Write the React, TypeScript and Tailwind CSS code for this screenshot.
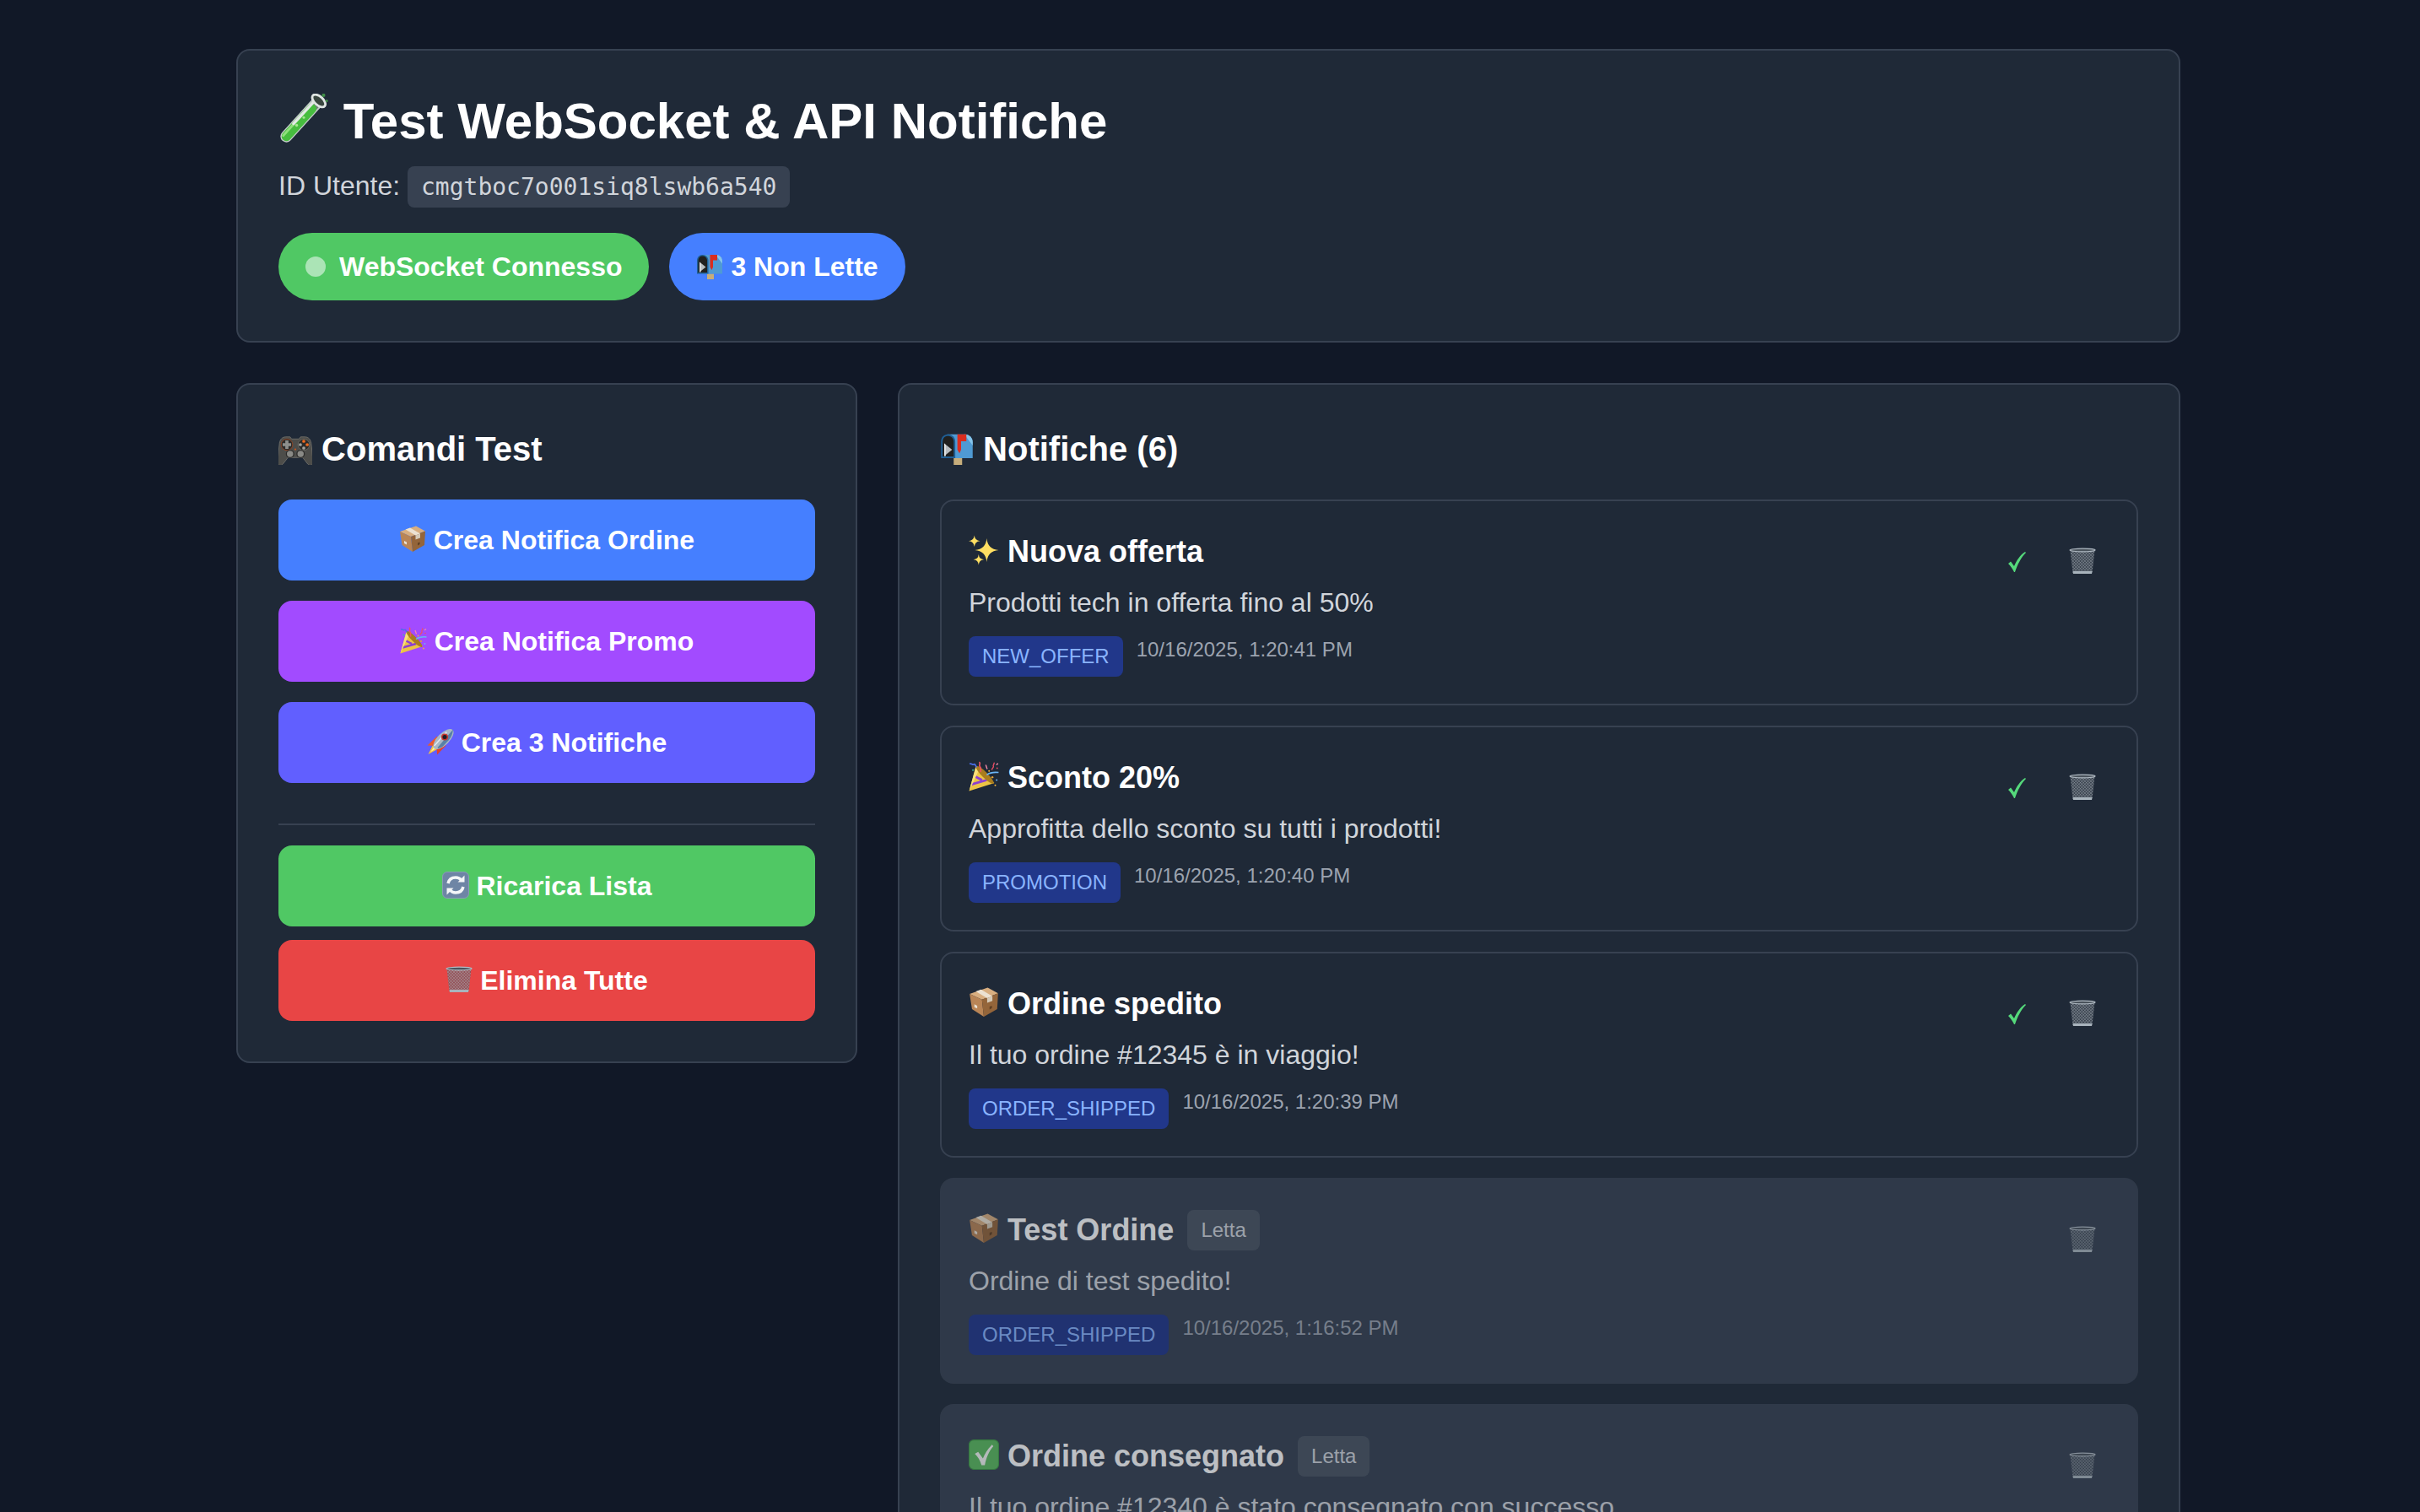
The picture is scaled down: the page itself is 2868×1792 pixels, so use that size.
type EmojiName = "tube" | "mailbox" | "gamepad" | "box" | "popper" | "rocket" | "refresh" | "trash" | "sparkles" | "checkbox";

const star = (x: number, y: number, r: number) =>
  `M${x} ${y - r}Q${x + r * 0.08} ${y - r * 0.08} ${x + r} ${y}Q${x + r * 0.08} ${y + r * 0.08} ${x} ${y + r}Q${x - r * 0.08} ${y + r * 0.08} ${x - r} ${y}Q${x - r * 0.08} ${y - r * 0.08} ${x} ${y - r}Z`;

const emojiShapes: Record<EmojiName, React.ReactNode> = {
  tube: (
    <>
      <path d="M10 54 50 10" stroke="#c3ccc8" strokeWidth="15" strokeLinecap="round" />
      <path d="M10 54 50 10" stroke="#6f7d76" strokeWidth="11" strokeLinecap="round" />
      <path d="M10 54 42 19" stroke="#47bd3f" strokeWidth="12" strokeLinecap="round" />
      <path d="M6 53 37 19" stroke="#8fe07c" strokeWidth="3" strokeLinecap="round" />
      <path d="M19 38 44 11" stroke="#e3e8e5" strokeWidth="3.5" strokeLinecap="round" />
      <ellipse cx="51" cy="9" rx="10" ry="5.5" transform="rotate(42 51 9)" fill="#39463f" stroke="#dfe5e2" strokeWidth="3" />
      <circle cx="57" cy="2" r="2.2" fill="#3f8f47" />
      <circle cx="61" cy="9" r="1.6" fill="#3f8f47" />
      <circle cx="23" cy="40" r="1.8" fill="#a7e692" />
      <circle cx="32" cy="30" r="1.6" fill="#a7e692" />
    </>
  ),
  mailbox: (
    <>
      <path d="M26 51h16v13H26z" fill="#c6ad7b" />
      <path d="M14 6h33c9 0 15 7 15 15v30H14z" fill="#4f9ad3" />
      <path d="M46 6h1c9 0 15 7 15 15v6z" fill="#86c4ea" />
      <path d="M2 20C2 12 7 6 15 6s14 6 14 14v31H2z" fill="#1f5f95" />
      <path d="M5 20C5 13 9 9 15 9s11 4 11 11v28H5z" fill="#20201f" />
      <path d="M8 23 23 35 8 47z" fill="#b8bdc0" />
      <path d="M8 23v24h3V26z" fill="#e3e6e7" />
      <path d="M33 6h17v13H40v16l-3 7-4-7z" fill="#d92d1f" />
    </>
  ),
  gamepad: (
    <g transform="translate(0 7) scale(1 .98)">
      <path d="M14 4h8l3 4h14l3-4h8c7 0 11 5 12 12l4 38c0 5-7 7-10 3L46 44H18L8 57c-3 4-10 2-10-3l4-38C3 9 7 4 14 4Z" fill="#4d4d4a" stroke="#6d6d69" strokeWidth="1.5" />
      <circle cx="16" cy="19" r="11" fill="#2c2c2b" stroke="#a1481f" strokeWidth="1.2" />
      <path d="M13 11h6v5h5v6h-5v5h-6v-5H8v-6h5z" fill="#8d8f8c" />
      <circle cx="48" cy="19" r="11" fill="#2c2c2b" stroke="#77776f" strokeWidth="1.2" />
      <circle cx="48" cy="12.5" r="3" fill="#ef6a1f" />
      <circle cx="54.5" cy="19" r="3" fill="#ef6a1f" />
      <circle cx="41.5" cy="19" r="3" fill="#a3a39e" />
      <circle cx="48" cy="25.5" r="3" fill="#a3a39e" />
      <circle cx="22" cy="37" r="7" fill="#8a8a86" stroke="#2b2b2a" strokeWidth="2" />
      <circle cx="42" cy="37" r="7" fill="#8a8a86" stroke="#2b2b2a" strokeWidth="2" />
      <circle cx="32" cy="28" r="1.8" fill="#c4561f" />
    </g>
  ),
  box: (
    <>
      <path d="M2 14 40 1l22 12-34 13z" fill="#d8ae80" />
      <path d="M2 14 28 26l4 36L7 46z" fill="#b98556" />
      <path d="M28 26 62 13l-2 33-28 16z" fill="#94653a" />
      <path d="M15 9 26 5l24 14-11 4z" fill="#ece2d2" />
      <path d="m39 23 11-4v10l-11 4z" fill="#d5cab8" />
      <path d="M12 36l6 3v6l-6-3z" fill="#e9e1d3" />
      <path d="M44 41l5-2v5l-5 3z" fill="#5f3f22" />
    </>
  ),
  popper: (
    <>
      <path d="M1 63 15 12l39 34z" fill="#ecc444" />
      <path d="M6 49 38 40M11 31l17 9" stroke="#8b3fd1" strokeWidth="5" />
      <path d="M1 63 15 12l7 6z" fill="#f8e07a" />
      <ellipse cx="34" cy="29" rx="6" ry="26" transform="rotate(-45 34 29)" fill="#a97c1e" />
      <path d="M38 29c7-5 16-6 25-5" stroke="#6ab4f5" strokeWidth="3" fill="none" />
      <path d="M22 2c5 3-2 6 2 10s-1 6 2 11" stroke="#ef5264" strokeWidth="3" fill="none" />
      <path d="M2 6c4-2 6 3 9 1s3 4 6 6" stroke="#4a6ee8" strokeWidth="3" fill="none" />
      <path d="M53 3c3 3-3 5-1 8s-4 3-3 8" stroke="#ec4d66" strokeWidth="2.5" fill="none" />
      <path d="M36 8l3 9M62 5l-4 3" stroke="#f28aa8" strokeWidth="2.5" />
      <circle cx="50" cy="34" r="2.2" fill="#e2a23a" />
      <circle cx="59" cy="40" r="1.8" fill="#6ab4f5" />
      <circle cx="56" cy="51" r="1.8" fill="#f0b23a" />
      <circle cx="43" cy="21" r="1.8" fill="#f0b23a" />
      <circle cx="60" cy="15" r="1.6" fill="#ec4d66" />
      <circle cx="9" cy="19" r="1.8" fill="#3fbf9f" />
    </>
  ),
  rocket: (
    <>
      <path d="M3 62 16 36l12 12z" fill="#f6c63b" />
      <path d="M9 56 18 42l5 5z" fill="#fff0a8" />
      <path d="M1 41 24 19l5 15-12 8z" fill="#ec5a2a" />
      <path d="M24 63 45 41l-14-6-8 12z" fill="#e2402c" />
      <ellipse cx="39" cy="26" rx="31" ry="14" transform="rotate(-45 39 26)" fill="#a9b8c5" />
      <path d="M62 3c-1 10-4 18-10 25L39 42c-4 4-9 5-12 6l-2-2z" fill="#5781a6" />
      <path d="M18 41 46 10" stroke="#e4eaef" strokeWidth="3" strokeLinecap="round" />
      <circle cx="42" cy="21" r="8" fill="#c7362b" />
      <circle cx="42" cy="21" r="5" fill="#1e1e26" />
    </>
  ),
  refresh: (
    <>
      <rect x="1" y="1" width="62" height="62" rx="11" fill="#6e85a5" stroke="#8a9cb6" strokeWidth="2" />
      <path d="M14 28c2-9 9-14 18-14 5 0 10 2 13 6" stroke="#f4f6f8" strokeWidth="7" fill="none" />
      <path d="M37 25h16V9z" fill="#f4f6f8" />
      <path d="M50 36c-2 9-9 14-18 14-5 0-10-2-13-6" stroke="#f4f6f8" strokeWidth="7" fill="none" />
      <path d="M27 39H11v16z" fill="#f4f6f8" />
    </>
  ),
  trash: (
    <>
      <defs>
        <pattern id="mesh" width="5" height="5" patternUnits="userSpaceOnUse" patternTransform="rotate(45)">
          <path d="M0 0h5v5" stroke="#b4bdc5" strokeWidth="1.3" fill="none" />
        </pattern>
      </defs>
      <path d="M3 6h58l-6 54H9z" fill="#4c5660" fillOpacity="0.55" />
      <path d="M3 6h58l-6 54H9z" fill="url(#mesh)" />
      <path d="M9 56h46l-1 6H10z" fill="#a8b3bc" />
      <ellipse cx="32" cy="6" rx="30" ry="3.6" fill="#4a535c" stroke="#b0bac3" strokeWidth="2.4" />
    </>
  ),
  sparkles: (
    <>
      <path d={star(38, 32, 25)} fill="#ffdf62" />
      <path d={star(12, 13, 12)} fill="#ffdf62" />
      <path d={star(21, 52, 11)} fill="#ffdf62" />
    </>
  ),
  checkbox: (
    <>
      <rect x="1" y="1" width="62" height="62" rx="10" fill="#5cbb5e" stroke="#3f9a46" strokeWidth="2" />
      <path d="M13 30l7-4 10 14c4-10 9-19 19-29l3 3C42 26 37 38 34 54h-7C24 44 20 37 13 30Z" fill="#f3f7f2" />
    </>
  ),
};

function Emoji({ name }: { name: EmojiName }) {
  return (
    <svg viewBox="0 0 64 64" className="inline-block h-[1em] w-[1em] align-[-0.12em]">
      {emojiShapes[name]}
    </svg>
  );
}

const notifications: {
  icon: EmojiName;
  title: string;
  message: string;
  type?: string;
  date?: string;
  read: boolean;
}[] = [
  { icon: "sparkles", title: "Nuova offerta", message: "Prodotti tech in offerta fino al 50%", type: "NEW_OFFER", date: "10/16/2025, 1:20:41 PM", read: false },
  { icon: "popper", title: "Sconto 20%", message: "Approfitta dello sconto su tutti i prodotti!", type: "PROMOTION", date: "10/16/2025, 1:20:40 PM", read: false },
  { icon: "box", title: "Ordine spedito", message: "Il tuo ordine #12345 è in viaggio!", type: "ORDER_SHIPPED", date: "10/16/2025, 1:20:39 PM", read: false },
  { icon: "box", title: "Test Ordine", message: "Ordine di test spedito!", type: "ORDER_SHIPPED", date: "10/16/2025, 1:16:52 PM", read: true },
  { icon: "checkbox", title: "Ordine consegnato", message: "Il tuo ordine #12340 è stato consegnato con successo", read: true },
];

function NotificationCard({ n }: { n: (typeof notifications)[number] }) {
  return (
    <div
      className={`flex justify-between rounded-2xl border-2 p-8 ${
        n.read ? "border-[#374151] bg-[#374151] opacity-70" : "border-[#374151] bg-[#1f2937]"
      }`}
    >
      <div>
        <div className="mb-2 flex items-center gap-4">
          <h3 className="text-[36px] leading-[56px] font-bold text-white">
            <Emoji name={n.icon} /> {n.title}
          </h3>
          {n.read && (
            <span className="rounded-lg bg-[#4b5563] px-4 py-2 text-[24px] leading-8 text-[#d1d5db]">Letta</span>
          )}
        </div>
        <p className="text-[32px] leading-[48px] text-[#d1d5db]">{n.message}</p>
        {n.type && (
          <div className="mt-4 flex items-start gap-4">
            <span className="rounded-lg bg-[#21378a] px-4 py-2 text-[24px] leading-8 text-[#8ab4ff]">{n.type}</span>
            <span className="text-[24px] leading-8 text-[#9ca3af]">{n.date}</span>
          </div>
        )}
      </div>
      <div className="flex items-start gap-4">
        {!n.read && (
          <button aria-label="Segna come letta" className="flex h-20 w-14 items-center justify-center pr-1">
            <svg viewBox="0 0 21 24" className="h-6 w-[21px]" fill="#55d97b">
              <path d="M0 14 3 11.5 7 17C10 10 14 4 20 0L21 1C15 7 11 15 8 24H7C5 20 3 17 0 14Z" />
            </svg>
          </button>
        )}
        <button className="w-16 py-4 text-center text-[32px] leading-[48px]">
          <Emoji name="trash" />
        </button>
      </div>
    </div>
  );
}

function CommandButton({ color, children }: { color: string; children: React.ReactNode }) {
  return (
    <button className={`w-full rounded-2xl py-6 text-center text-[32px] leading-[48px] font-bold text-white ${color}`}>
      {children}
    </button>
  );
}

export default function App() {
  return (
    <div className="h-[1792px] overflow-hidden bg-[#111827] pt-[58px] pl-[280px] font-['Liberation_Sans',sans-serif]">
      <div className="w-[2304px]">
        <div className="mb-12 rounded-2xl border-2 border-[#374151] bg-[#1f2937] p-12">
          <h1 className="mb-4 text-[60px] leading-[72px] font-bold text-white">
            <Emoji name="tube" /> Test WebSocket &amp; API Notifiche
          </h1>
          <p className="text-[32px] leading-[48px] text-[#d1d5db]">
            ID Utente:{" "}
            <code className="rounded-lg bg-[#374151] px-4 py-2 font-['DejaVu_Sans_Mono',monospace] text-[28px] leading-none">
              cmgtboc7o001siq8lswb6a540
            </code>
          </p>
          <div className="mt-8 flex gap-6">
            <div className="flex items-center gap-4 rounded-full bg-[#50c864] px-8 py-4 text-[32px] leading-[48px] font-bold text-white">
              <span className="h-6 w-6 rounded-full bg-[#abe4b6]" />
              WebSocket Connesso
            </div>
            <div className="rounded-full bg-[#457fff] px-8 py-4 text-[32px] leading-[48px] font-bold text-white">
              <Emoji name="mailbox" /> 3 Non Lette
            </div>
          </div>
        </div>
        <div className="grid grid-cols-3 gap-12">
          <div className="self-start rounded-2xl border-2 border-[#374151] bg-[#1f2937] p-12">
            <h2 className="mb-8 text-[40px] leading-[56px] font-bold text-white">
              <Emoji name="gamepad" /> Comandi Test
            </h2>
            <div className="flex flex-col gap-6">
              <CommandButton color="bg-[#457fff]">
                <Emoji name="box" /> Crea Notifica Ordine
              </CommandButton>
              <CommandButton color="bg-[#a24bff]">
                <Emoji name="popper" /> Crea Notifica Promo
              </CommandButton>
              <CommandButton color="bg-[#615fff]">
                <Emoji name="rocket" /> Crea 3 Notifiche
              </CommandButton>
            </div>
            <div className="mt-12 flex flex-col gap-4 border-t-2 border-[#374151] pt-6">
              <CommandButton color="bg-[#50c864]">
                <Emoji name="refresh" /> Ricarica Lista
              </CommandButton>
              <CommandButton color="bg-[#e84545]">
                <Emoji name="trash" /> Elimina Tutte
              </CommandButton>
            </div>
          </div>
          <div className="col-span-2 rounded-2xl border-2 border-[#374151] bg-[#1f2937] p-12">
            <h2 className="mb-8 text-[40px] leading-[56px] font-bold text-white">
              <Emoji name="mailbox" /> Notifiche (6)
            </h2>
            <div className="flex flex-col gap-6">
              {notifications.map((n) => (
                <NotificationCard key={n.title} n={n} />
              ))}
            </div>
          </div>
        </div>
      </div>
    </div>
  );
}
